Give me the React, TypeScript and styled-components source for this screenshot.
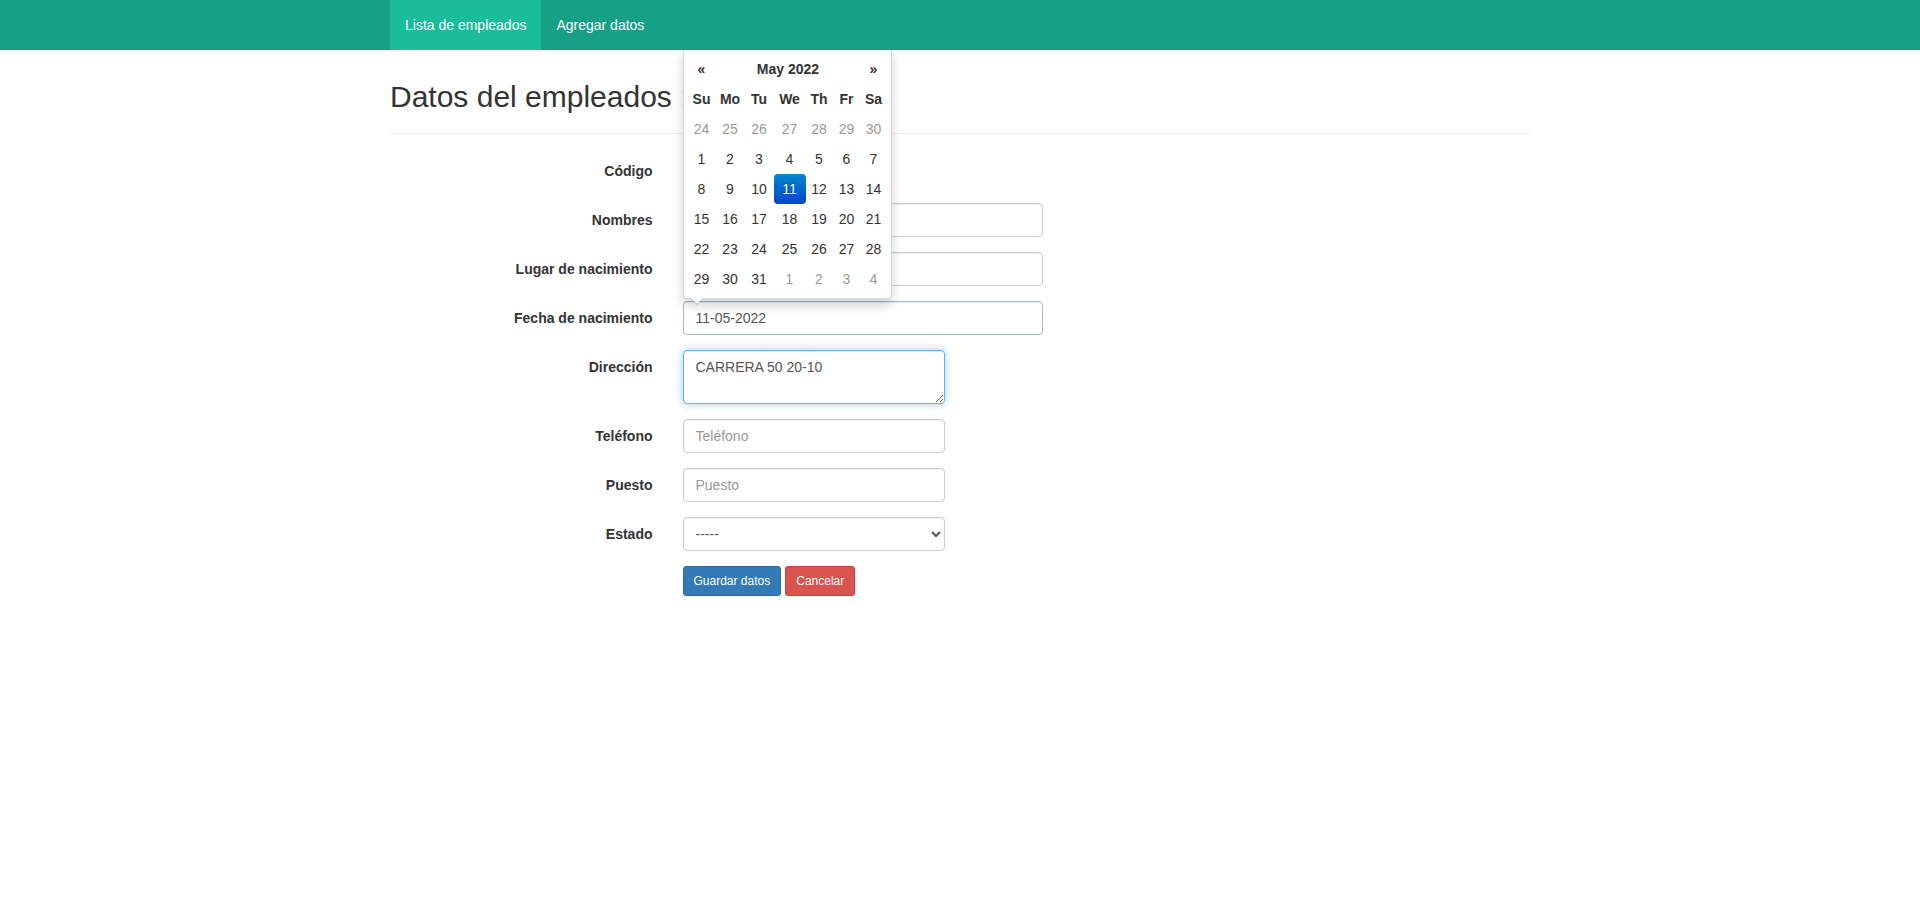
import React, { useEffect, useRef } from "react";
import styled, { createGlobalStyle, css } from "styled-components";

const GlobalStyle = createGlobalStyle`
  * { box-sizing: border-box; }
  html, body { margin: 0; padding: 0; background: #fff; }
  body {
    font-family: "Liberation Sans", Arial, Helvetica, sans-serif;
    font-size: 14px;
    line-height: 1.42857143;
    color: #333;
  }
`;

const Navbar = styled.nav`
  position: relative;
  z-index: 20;
  height: 50px;
  background: #16a085;
`;

const Container = styled.div`
  width: 1170px;
  margin: 0 auto;
  padding: 0 15px;
`;

const NavList = styled.ul`
  display: flex;
  list-style: none;
  margin: 0;
  padding: 0;
`;

const NavLink = styled.a<{ $active?: boolean }>`
  display: block;
  padding: 15px;
  line-height: 20px;
  font-size: 14px;
  color: #fff;
  text-decoration: none;
  background: ${(p) => (p.$active ? "#1abc9c" : "transparent")};
`;

const Title = styled.h2`
  margin: 30px 0 10px;
  font-size: 30px;
  font-weight: normal;
  line-height: 1.1;
  color: #333;
`;

const Rule = styled.hr`
  margin: 20px 0;
  border: 0;
  border-top: 1px solid #eee;
`;

const Form = styled.form`
  display: flex;
  flex-direction: column;
`;

const FormRow = styled.div`
  display: flex;
  margin: 0 -15px 15px;
`;

const LabelCol = styled.label`
  flex: 0 0 25%;
  padding: 7px 15px 0;
  text-align: right;
  font-weight: bold;
  line-height: 20px;
`;

const FieldCol = styled.div<{ $span: number; $offset?: number }>`
  position: relative;
  flex: 0 0 ${(p) => (p.$span / 12) * 100}%;
  margin-left: ${(p) => ((p.$offset || 0) / 12) * 100}%;
  padding: 0 15px;
`;

const controlBase = css`
  display: block;
  width: 100%;
  height: 34px;
  padding: 6px 12px;
  font-family: "Liberation Sans", Arial, Helvetica, sans-serif;
  font-size: 14px;
  line-height: 1.42857143;
  color: #555;
  background: #fff;
  border: 1px solid #ccc;
  border-radius: 4px;
  box-shadow: inset 0 1px 1px rgba(0, 0, 0, 0.075);
  outline: none;
  &::placeholder { color: #999; }
`;

const Input = styled.input<{ $hover?: boolean }>`
  ${controlBase}
  ${(p) => p.$hover && css`border-color: #a9bacb;`}
`;

const TextArea = styled.textarea`
  ${controlBase}
  height: 54px;
  resize: vertical;
  border-color: #66afe9;
  box-shadow: inset 0 1px 1px rgba(0, 0, 0, 0.075), 0 0 8px rgba(102, 175, 233, 0.6);
`;

const Select = styled.select`
  ${controlBase}
  padding: 6px 8px;
`;

const ButtonBar = styled.div`
  display: flex;
  gap: 4px;
`;

const Button = styled.button<{ $variant: "primary" | "danger" }>`
  padding: 5px 10px;
  font-family: "Liberation Sans", Arial, Helvetica, sans-serif;
  font-size: 12px;
  line-height: 1.5;
  border-radius: 3px;
  color: #fff;
  cursor: pointer;
  border: 1px solid ${(p) => (p.$variant === "primary" ? "#2e6da4" : "#d43f3a")};
  background: ${(p) => (p.$variant === "primary" ? "#337ab7" : "#d9534f")};
`;

const Picker = styled.div`
  position: absolute;
  z-index: 10;
  left: 15px;
  bottom: calc(100% + 2px);
  width: 209px;
  padding: 4px;
  background: #fff;
  border: 1px solid rgba(0, 0, 0, 0.15);
  border-radius: 4px;
  box-shadow: 0 6px 12px rgba(0, 0, 0, 0.175);
  &::before {
    content: "";
    position: absolute;
    left: 6px;
    bottom: -7px;
    border-left: 7px solid transparent;
    border-right: 7px solid transparent;
    border-top: 7px solid rgba(0, 0, 0, 0.15);
  }
  &::after {
    content: "";
    position: absolute;
    left: 7px;
    bottom: -6px;
    border-left: 6px solid transparent;
    border-right: 6px solid transparent;
    border-top: 6px solid #fff;
  }
`;

const PickerGrid = styled.div`
  display: grid;
  grid-template-columns: 28px 29px 29px 32px 27px 28px 26px;
  grid-auto-rows: 30px;
`;

const Cell = styled.div<{ $muted?: boolean; $active?: boolean; $head?: boolean; $span?: number }>`
  display: flex;
  align-items: center;
  justify-content: center;
  border-radius: 4px;
  font-size: 14px;
  color: ${(p) => (p.$muted ? "#999" : "#333")};
  font-weight: ${(p) => (p.$head ? "bold" : "normal")};
  ${(p) => p.$span && css`grid-column: span ${p.$span};`}
  ${(p) =>
    p.$active &&
    css`
      color: #fff;
      background: linear-gradient(to bottom, #0088cc, #0044cc);
      text-shadow: 0 -1px 0 rgba(0, 0, 0, 0.25);
    `}
`;

const weeks: { d: number; muted?: boolean }[][] = [
  [24, 25, 26, 27, 28, 29, 30].map((d) => ({ d, muted: true })),
  [1, 2, 3, 4, 5, 6, 7].map((d) => ({ d })),
  [8, 9, 10, 11, 12, 13, 14].map((d) => ({ d })),
  [15, 16, 17, 18, 19, 20, 21].map((d) => ({ d })),
  [22, 23, 24, 25, 26, 27, 28].map((d) => ({ d })),
  [
    { d: 29 },
    { d: 30 },
    { d: 31 },
    { d: 1, muted: true },
    { d: 2, muted: true },
    { d: 3, muted: true },
    { d: 4, muted: true },
  ],
];

const DatePicker = () => (
  <Picker>
    <PickerGrid>
      <Cell $head>«</Cell>
      <Cell $head $span={5}>May 2022</Cell>
      <Cell $head>»</Cell>
      {["Su", "Mo", "Tu", "We", "Th", "Fr", "Sa"].map((d) => (
        <Cell key={d} $head>{d}</Cell>
      ))}
      {weeks.map((w, i) =>
        w.map((c, j) => (
          <Cell key={`${i}-${j}`} $muted={c.muted} $active={i === 2 && c.d === 11}>
            {c.d}
          </Cell>
        ))
      )}
    </PickerGrid>
  </Picker>
);

export default function App() {
  const taRef = useRef<HTMLTextAreaElement>(null);
  useEffect(() => {
    const el = taRef.current;
    if (el) {
      el.focus();
      const n = el.value.length;
      el.setSelectionRange(n, n);
    }
  }, []);

  return (
    <>
      <GlobalStyle />
      <Navbar>
        <Container>
          <NavList>
            <li><NavLink href="#" $active>Lista de empleados</NavLink></li>
            <li><NavLink href="#">Agregar datos</NavLink></li>
          </NavList>
        </Container>
      </Navbar>
      <Container>
        <Title>Datos del empleados :</Title>
        <Rule />
        <Form onSubmit={(e) => e.preventDefault()}>
          <FormRow>
            <LabelCol>Código</LabelCol>
            <FieldCol $span={2}><Input /></FieldCol>
          </FormRow>
          <FormRow>
            <LabelCol>Nombres</LabelCol>
            <FieldCol $span={4}><Input /></FieldCol>
          </FormRow>
          <FormRow>
            <LabelCol>Lugar de nacimiento</LabelCol>
            <FieldCol $span={4}><Input /></FieldCol>
          </FormRow>
          <FormRow>
            <LabelCol>Fecha de nacimiento</LabelCol>
            <FieldCol $span={4}>
              <DatePicker />
              <Input $hover defaultValue="11-05-2022" />
            </FieldCol>
          </FormRow>
          <FormRow>
            <LabelCol>Dirección</LabelCol>
            <FieldCol $span={3}>
              <TextArea ref={taRef} rows={2} defaultValue="CARRERA 50 20-10" />
            </FieldCol>
          </FormRow>
          <FormRow>
            <LabelCol>Teléfono</LabelCol>
            <FieldCol $span={3}><Input placeholder="Teléfono" /></FieldCol>
          </FormRow>
          <FormRow>
            <LabelCol>Puesto</LabelCol>
            <FieldCol $span={3}><Input placeholder="Puesto" /></FieldCol>
          </FormRow>
          <FormRow>
            <LabelCol>Estado</LabelCol>
            <FieldCol $span={3}>
              <Select defaultValue="">
                <option value="">-----</option>
                <option value="1">Activo</option>
                <option value="0">Inactivo</option>
              </Select>
            </FieldCol>
          </FormRow>
          <FormRow>
            <FieldCol $span={9} $offset={3}>
              <ButtonBar>
                <Button type="submit" $variant="primary">Guardar datos</Button>
                <Button type="button" $variant="danger">Cancelar</Button>
              </ButtonBar>
            </FieldCol>
          </FormRow>
        </Form>
      </Container>
    </>
  );
}
